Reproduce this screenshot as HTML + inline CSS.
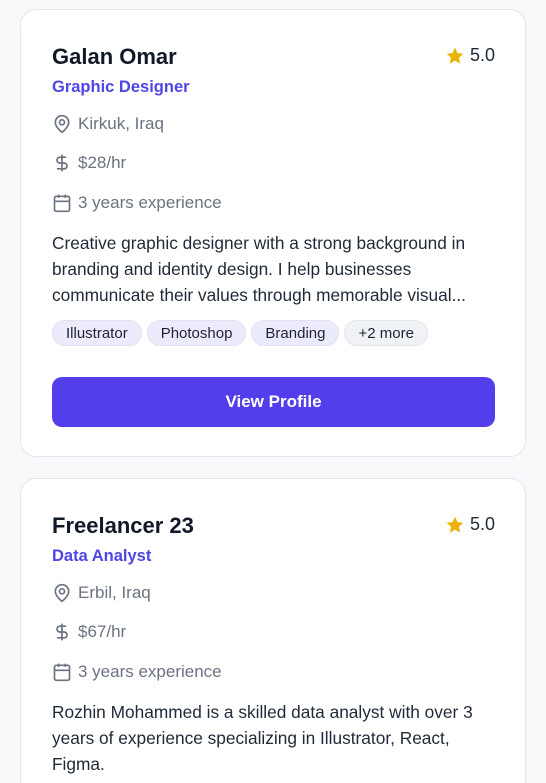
<!DOCTYPE html><html><head><style>
html,body{margin:0;height:783px;overflow:hidden}
body{background:#f8f9fb;font-family:"Liberation Sans",sans-serif;width:546px;position:relative}
.card{position:absolute;left:20px;width:504px;background:#fff;border:1px solid #e3e6eb;border-radius:16px;height:446px}
.in{position:absolute;left:31px;right:30px;top:0}
.name{position:absolute;top:34px;font-size:22px;font-weight:bold;color:#111827}
.star{position:absolute;right:0;top:35px;font-size:18px;color:#1f2937;display:flex;align-items:center;gap:5px}
.role{position:absolute;top:68px;font-size:16.5px;font-weight:bold;color:#4f46e5}
.row{position:absolute;font-size:17px;color:#6b7280;display:flex;align-items:center;gap:6px;left:0}
.desc{position:absolute;top:220px;font-size:17.3px;line-height:26px;color:#1f2937;width:448px}
.tags{position:absolute;top:310px;display:flex;gap:5px}
.tag{height:26px;line-height:26px;padding:0 13px;border-radius:13px;background:#ecebfb;border:1px solid #e2e1f4;font-size:15px;color:#1f2233;box-sizing:border-box}
.btn{position:absolute;top:367px;left:0;right:0;height:50px;border-radius:10px;background:#523eea;color:#fff;font-weight:bold;font-size:17px;text-align:center;line-height:50px}
</style></head><body>
<div class="card" style="top:9px"><div class="in">
<div class="name">Galan Omar</div>
<div class="star"><svg width="20" height="20" viewBox="0 0 24 24"><path d="M12 2l3 6.5 7 .8-5.2 4.8 1.4 7L12 17.6 5.8 21.1l1.4-7L2 9.3l7-.8z" fill="#eab308"/></svg>5.0</div>
<div class="role">Graphic Designer</div>
<div class="row" style="top:104px"><svg width="20" height="20" viewBox="0 0 24 24" fill="none" stroke="#6b7280" stroke-width="2"><path d="M20 10c0 6-8 12-8 12S4 16 4 10a8 8 0 0116 0z"/><circle cx="12" cy="10" r="3"/></svg>Kirkuk, Iraq</div>
<div class="row" style="top:143px"><svg width="20" height="20" viewBox="0 0 24 24" fill="none" stroke="#6b7280" stroke-width="2"><path d="M12 2v20M17 5H9.5a3.5 3.5 0 000 7h5a3.5 3.5 0 010 7H6"/></svg>$28/hr</div>
<div class="row" style="top:183px"><svg width="20" height="20" viewBox="0 0 24 24" fill="none" stroke="#6b7280" stroke-width="2"><rect x="3" y="4" width="18" height="18" rx="2"/><path d="M16 2v4M8 2v4M3 10h18"/></svg>3 years experience</div>
<div class="desc">Creative graphic designer with a strong background in branding and identity design. I help businesses communicate their values through memorable visual...</div>
<div class="tags"><div class="tag">Illustrator</div><div class="tag">Photoshop</div><div class="tag">Branding</div><div class="tag" style="background:#f0f2f6;border-color:#e1e5ec">+2 more</div></div>
<div class="btn">View Profile</div>
</div></div>
<div class="card" style="top:478px"><div class="in">
<div class="name">Freelancer 23</div>
<div class="star"><svg width="20" height="20" viewBox="0 0 24 24"><path d="M12 2l3 6.5 7 .8-5.2 4.8 1.4 7L12 17.6 5.8 21.1l1.4-7L2 9.3l7-.8z" fill="#eab308"/></svg>5.0</div>
<div class="role">Data Analyst</div>
<div class="row" style="top:104px"><svg width="20" height="20" viewBox="0 0 24 24" fill="none" stroke="#6b7280" stroke-width="2"><path d="M20 10c0 6-8 12-8 12S4 16 4 10a8 8 0 0116 0z"/><circle cx="12" cy="10" r="3"/></svg>Erbil, Iraq</div>
<div class="row" style="top:143px"><svg width="20" height="20" viewBox="0 0 24 24" fill="none" stroke="#6b7280" stroke-width="2"><path d="M12 2v20M17 5H9.5a3.5 3.5 0 000 7h5a3.5 3.5 0 010 7H6"/></svg>$67/hr</div>
<div class="row" style="top:183px"><svg width="20" height="20" viewBox="0 0 24 24" fill="none" stroke="#6b7280" stroke-width="2"><rect x="3" y="4" width="18" height="18" rx="2"/><path d="M16 2v4M8 2v4M3 10h18"/></svg>3 years experience</div>
<div class="desc">Rozhin Mohammed is a skilled data analyst with over 3 years of experience specializing in Illustrator, React, Figma.</div>
</div></div>
</body></html>
